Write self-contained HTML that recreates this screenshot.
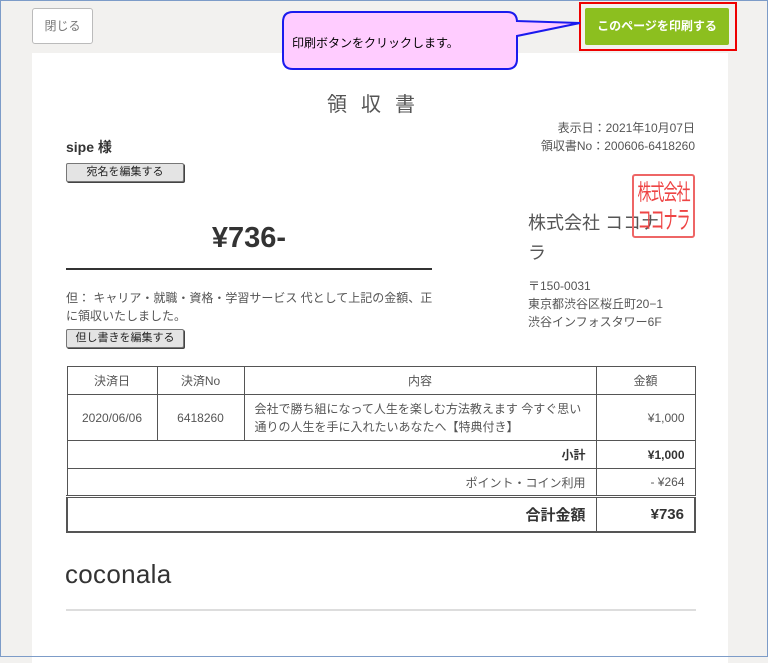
<!DOCTYPE html>
<html><head><meta charset="utf-8"><style>
*{margin:0;padding:0;box-sizing:border-box}
body{width:768px;height:657px;overflow:hidden;background:#f2f1ef;font-family:"Liberation Sans","Noto Sans CJK JP",sans-serif;color:#444;position:relative}
.a{position:absolute;white-space:nowrap}
.paper{position:absolute;left:32px;top:53px;width:696px;height:610px;background:#fff}
.btn{position:absolute;background:#e4e4e4;border:1px solid #777;border-radius:2px;box-shadow:1px 1px 0 #444;font-size:11px;color:#222;text-align:center;line-height:17px}
table{position:absolute;left:66px;top:366px;width:630px;border-collapse:collapse;font-size:12px;color:#555}
td{border:1px solid #555;padding:0 10px}
</style></head><body>
<div class="a" style="left:32px;top:8px;width:61px;height:36px;background:#fff;border:1px solid #bbb;border-radius:3px;font-size:12px;color:#777;text-align:center;line-height:34px">閉じる</div>
<div class="paper"></div>
<div class="a" style="left:579px;top:2px;width:158px;height:49px;border:2px solid #e00"></div>
<div class="a" style="left:585px;top:8px;width:144px;height:37px;background:#8cbf1f;border-radius:2px;color:#fff;font-size:12px;font-weight:bold;text-align:center;line-height:37px">このページを印刷する</div>
<svg class="a" style="left:0;top:0" width="768" height="80"><path d="M293 12 H507 Q517 12 517 22 L517 21 L580 23 L517 36 V59 Q517 69 507 69 H293 Q283 69 283 59 V22 Q283 12 293 12Z" fill="#ffccff" stroke="#1a1aee" stroke-width="2"/></svg>
<div class="a" style="left:292px;top:34px;font-size:12px;color:#000">印刷ボタンをクリックします。</div>
<div class="a" style="left:327px;top:88px;font-size:20px;letter-spacing:14px;color:#555">領収書</div>
<div class="a" style="right:73px;top:119px;font-size:12px;line-height:18px;text-align:right;color:#555">表示日：2021年10月07日<br>領収書No：200606-6418260</div>
<div class="a" style="left:66px;top:137px;font-size:14px;font-weight:bold;color:#333">sipe 様</div>
<div class="btn" style="left:66px;top:163px;width:118px;height:19px">宛名を編集する</div>
<div class="a" style="left:66px;top:222px;width:366px;text-align:center;font-size:29px;font-weight:bold;color:#333">¥736-</div>
<div class="a" style="left:66px;top:268px;width:366px;height:2px;background:#333"></div>
<div class="a" style="left:66px;top:289px;font-size:12px;line-height:18px;color:#555">但： キャリア・就職・資格・学習サービス 代として上記の金額、正<br>に領収いたしました。</div>
<div class="btn" style="left:66px;top:329px;width:118px;height:19px">但し書きを編集する</div>
<div class="a" style="left:528px;top:208px;font-size:18px;line-height:30px;color:#555">株式会社 ココナ<br>ラ</div>
<div class="a" style="left:632px;top:174px;width:63px;height:64px;border:2px solid #e66;border-radius:3px;color:#e44;text-align:center;overflow:hidden">
<div style="font-size:14px;line-height:14px;letter-spacing:-1px;margin-top:5px;transform:scaleY(1.6);transform-origin:top">株式会社</div>
<div style="font-size:14px;line-height:14px;letter-spacing:-1px;margin-top:12px;transform:scaleY(1.8);transform-origin:top">ココナラ</div>
</div>
<div class="a" style="left:528px;top:277px;font-size:12px;line-height:18px;color:#555">〒150-0031<br>東京都渋谷区桜丘町20−1<br>渋谷インフォスタワー6F</div>
<table>
<tr style="height:28px;text-align:center"><td style="width:90px;padding:0">決済日</td><td style="width:87px;padding:0">決済No</td><td style="width:352px;padding:0">内容</td><td style="padding:0">金額</td></tr>
<tr style="height:46px"><td style="text-align:center;padding:0">2020/06/06</td><td style="text-align:center;padding:0">6418260</td><td style="line-height:18px">会社で勝ち組になって人生を楽しむ方法教えます 今すぐ思い通りの人生を手に入れたいあなたへ【特典付き】</td><td style="text-align:right">¥1,000</td></tr>
<tr style="height:28px;font-weight:bold;color:#333"><td colspan="3" style="text-align:right">小計</td><td style="text-align:right">¥1,000</td></tr>
<tr style="height:28px"><td colspan="3" style="text-align:right">ポイント・コイン利用</td><td style="text-align:right">- ¥264</td></tr>
<tr style="height:35px;font-weight:bold;font-size:15px;color:#333;border-top:3px double #555"><td colspan="3" style="text-align:right;border-width:2px 1px 2px 2px">合計金額</td><td style="text-align:right;border-width:2px 2px 2px 1px">¥736</td></tr>
</table>
<div class="a" style="left:65px;top:559px;font-size:26px;color:#333;letter-spacing:0.3px">coconala</div>
<div class="a" style="left:66px;top:609px;width:630px;height:2px;background:#ddd"></div>
<div class="a" style="left:0;top:0;width:768px;height:657px;border:1px solid #7d9cc8"></div>
</body></html>
